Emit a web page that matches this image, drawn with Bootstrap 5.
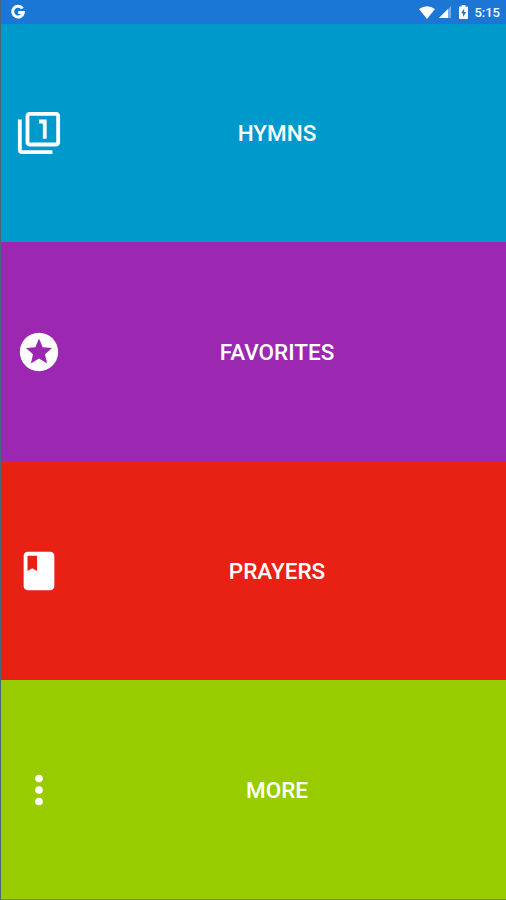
<!DOCTYPE html>
<html lang="en">
<head>
<meta charset="utf-8">
<meta name="viewport" content="width=device-width, initial-scale=1">
<title>Hymns</title>
<link rel="stylesheet" href="https://cdn.jsdelivr.net/npm/bootstrap@5.3.0/dist/css/bootstrap.min.css">
<style>
body{font-family:Roboto,"Liberation Sans",sans-serif}
.screen{height:900px;border-left:1px solid #45667c;border-bottom:1px solid #71961a}
.status{height:23.500px;background:#1b76d6;font-size:13px;font-weight:500;line-height:23px;padding:1px 6px 0 9px}
.tile{flex:1 1 0;min-height:0;padding-left:14.600px;font-size:22.500px;font-weight:500;line-height:26px}
.tile svg{width:46px;height:46px;flex:none}
.tile-label{padding-right:13.600px}
.battery{margin-left:8px}
.clock{margin-left:6px}
.blue{background:#0099cc}.purple{background:#9c27b0}.red{background:#e92014}.green{background:#99cc00}
</style>
</head>
<body>
<main class="screen d-flex flex-column text-white overflow-hidden">
<header class="status d-flex align-items-center flex-shrink-0">
<svg width="16" height="16" viewBox="0 0 16 16"><path d="M12.500 4.500A5.400 5.400 0 1 0 13.400 8.500H8.200" fill="none" stroke="#fff" stroke-width="3"/></svg>
<svg class="ms-auto" width="16" height="13" viewBox="0 0 16 13"><path d="M0 3Q8-2.600 16 3L8 13z" fill="#fff"/></svg>
<svg class="ms-1" width="12" height="12" viewBox="0 0 12 12"><path d="M12 0v12H0z" fill="#fff" fill-opacity=".4"/><path d="M9 3v9H0z" fill="#fff"/></svg>
<svg class="battery" width="9" height="14" viewBox="0 0 9 14"><path d="M2.700 0h3.600v1.500H8q1 0 1 1V13q0 1-1 1H1q-1 0-1-1V2.500q0-1 1-1h1.700z" fill="#fff"/><path d="M5.200 3.500 2 8.300h2V12l3.200-5H5.200z" fill="#1b76d6"/></svg>
<span class="clock">5:15</span>
</header>
<a class="tile blue d-flex align-items-center text-white text-decoration-none" href="#">
<svg viewBox="0 0 24 24" fill="#fff"><path d="M3 5H1v16c0 1.100.9 2 2 2h16v-2H3V5zm11 10h2V5h-4v2h2v8zm7-14H7c-1.100 0-2 .9-2 2v14c0 1.100.9 2 2 2h14c1.100 0 2-.9 2-2V3c0-1.100-.9-2-2-2zm0 16H7V3h14v14z"/></svg>
<span class="tile-label flex-grow-1 text-center">HYMNS</span></a>
<a class="tile purple d-flex align-items-center text-white text-decoration-none" href="#">
<svg viewBox="0 0 24 24" fill="#fff"><path d="M11.990 2C6.470 2 2 6.480 2 12s4.470 10 9.990 10C17.520 22 22 17.520 22 12S17.520 2 11.990 2zm4.240 16L12 15.450 7.770 18l1.120-4.810-3.730-3.230 4.920-.42L12 5l1.920 4.530 4.920.42-3.730 3.230L16.230 18z"/></svg>
<span class="tile-label flex-grow-1 text-center">FAVORITES</span></a>
<a class="tile red d-flex align-items-center text-white text-decoration-none" href="#">
<svg viewBox="0 0 24 24" fill="#fff"><path d="M18 2H6c-1.100 0-2 .9-2 2v16c0 1.100.9 2 2 2h12c1.100 0 2-.9 2-2V4c0-1.100-.9-2-2-2zM6 4h5v8l-2.500-1.500L6 12V4z"/></svg>
<span class="tile-label flex-grow-1 text-center">PRAYERS</span></a>
<a class="tile green d-flex align-items-center text-white text-decoration-none" href="#">
<svg viewBox="0 0 24 24" fill="#fff"><circle cx="12" cy="6" r="2"/><circle cx="12" cy="12" r="2"/><circle cx="12" cy="18" r="2"/></svg>
<span class="tile-label flex-grow-1 text-center">MORE</span></a>
</main>
<script src="https://cdn.jsdelivr.net/npm/bootstrap@5.3.0/dist/js/bootstrap.bundle.min.js"></script>
</body>
</html>
